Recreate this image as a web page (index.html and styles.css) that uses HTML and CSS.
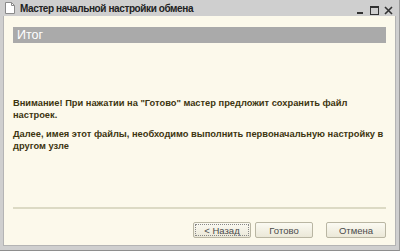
FILE: index.html
```html
<!DOCTYPE html>
<html lang="ru">
<head>
<meta charset="UTF-8" />
<title>Мастер начальной настройки обмена</title>
<link rel="stylesheet" href="styles.css">
</head>
<body>

<div class="window">
  <div class="titlebar">
    <svg class="doc-icon" width="10" height="12" viewBox="0 0 10 12">
      <path d="M0.5 0.5 H6.5 L9.5 3.5 V11.5 H0.5 Z" fill="#fff" stroke="#8a8a8a" />
      <path d="M6.5 0.5 V3.5 H9.5" fill="none" stroke="#8a8a8a" />
    </svg>
    <span class="title">Мастер начальной настройки обмена</span>
    <div class="controls">
      <svg width="9" height="9" viewBox="0 0 9 9"><rect x="1" y="6" width="6" height="2" fill="#333" /></svg>
      <svg width="9" height="9" viewBox="0 0 9 9"><rect x="0.5" y="0.5" width="8" height="8" fill="none" stroke="#333" /><rect x="0.5" y="0.5" width="8" height="1.5" fill="#333" /></svg>
      <svg width="9" height="9" viewBox="0 0 9 9"><path d="M1 1 L8 8 M8 1 L1 8" stroke="#333" stroke-width="1.6" /></svg>
    </div>
  </div>

  <div class="content">
    <div class="header">Итог</div>

    <div class="message">
      <p>Внимание! При нажатии на "Готово" мастер предложит сохранить файл настроек.</p>
      <p>Далее, имея этот файлы, необходимо выполнить первоначальную настройку в другом узле</p>
    </div>

    <div class="separator"></div>

    <div class="buttons">
      <button class="btn focused">&lt; Назад</button>
      <button class="btn">Готово</button>
      <button class="btn wide">Отмена</button>
    </div>
  </div>
</div>

</body>
</html>
```

FILE: styles.css
```css
body {
  margin: 0;
  font-family: "Liberation Sans", Arial, sans-serif;
  background: #c9c9c9;
}
.window {
  width: 400px;
  height: 251px;
  box-sizing: border-box;
  background: #cfcfcf;
  border-bottom: 1px solid #8e8e8e;
  border-right: 1px solid #9a9a9a;
  display: flex;
  flex-direction: column;
}
.titlebar {
  height: 16px;
  display: flex;
  align-items: center;
  padding-left: 5px;
}
.doc-icon {
  margin-right: 5px;
}
.title {
  font-size: 10px;
  font-weight: bold;
  color: #222;
  letter-spacing: -0.4px;
  margin-top: 1px;
}
.controls {
  margin-left: auto;
  display: flex;
  gap: 5px;
  padding-right: 6px;
  margin-top: 4px;
}
.content {
  margin: 0 3px 4px 3px;
  height: 230px;
  background: #fcf9eb;
  border: 1px solid #b4b4b4;
  border-top: none;
  box-sizing: border-box;
  padding: 11px 9px 0 9px;
  display: flex;
  flex-direction: column;
}
.header {
  height: 16px;
  background: #aaaaaa;
  color: #fff;
  font-size: 12.5px;
  line-height: 16px;
  padding-left: 4px;
}
.message {
  margin-top: 54px;
  font-size: 9.3px;
  font-weight: bold;
  color: #3d3510;
  line-height: 12px;
  height: 110px;
}
.message p {
  margin: 0 0 7px 0;
}
.separator {
  height: 2px;
  background: #dcdac4;
}
.buttons {
  display: flex;
  justify-content: flex-end;
  margin-top: 13px;
  gap: 4px;
}
.btn {
  font-family: "Liberation Sans", Arial, sans-serif;
  font-size: 9.5px;
  color: #4a4a4a;
  height: 16px;
  width: 58px;
  padding: 0;
  border: 1px solid #b9b6a3;
  border-radius: 2px;
  background: linear-gradient(#fbfaf2, #ebe8d8);
}
.btn.wide {
  width: 60px;
  margin-left: 9px;
}
.btn.focused {
  outline: 1px dotted #888;
  outline-offset: -3px;
}
```
